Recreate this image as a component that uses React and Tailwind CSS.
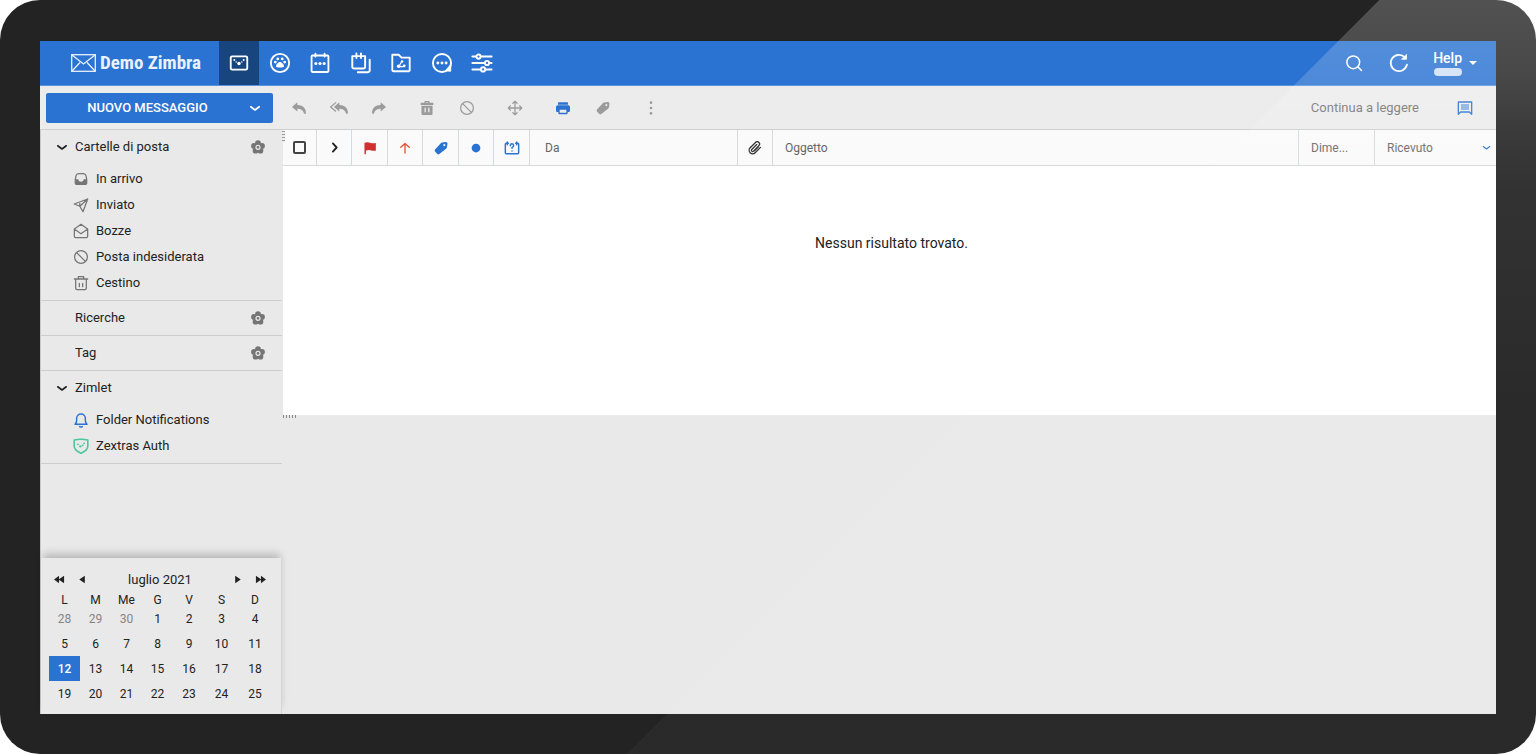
import clsx from 'clsx'

const Icon = ({ size = 16, children, className, solid = false, stroke = 2 }) => (
  <svg
    width={size}
    height={size}
    viewBox="0 0 24 24"
    className={clsx('shrink-0', className)}
    fill={solid ? 'currentColor' : 'none'}
    stroke={solid ? 'none' : 'currentColor'}
    strokeWidth={stroke}
    strokeLinecap="round"
    strokeLinejoin="round"
    aria-hidden="true"
  >
    {children}
  </svg>
)

const ChevronDown = ({ size = 12, className }) => (
  <Icon size={size} stroke={3.2} className={className}>
    <path d="M3.500 9.500 12 16l8.500-6.500" />
  </Icon>
)

const Flower = () => (
  <Icon size={16} solid className="text-[#757575]">
    <circle cx="12" cy="6" r="4.3" />
    <circle cx="18" cy="10.4" r="4.3" />
    <circle cx="15.7" cy="17.6" r="4.3" />
    <circle cx="8.3" cy="17.6" r="4.3" />
    <circle cx="6" cy="10.4" r="4.3" />
    <circle cx="12" cy="12.5" r="5" />
    <circle cx="12" cy="12.5" r="3" fill="none" stroke="#e9e9e9" strokeWidth="1.8" />
  </Icon>
)

const Forbidden = ({ size }) => (
  <Icon size={size} stroke={1.9}>
    <circle cx="12" cy="12" r="9.6" />
    <path d="M5.4 5.4l13.2 13.2" />
  </Icon>
)

const Tag = () => (
  <Icon size={16} solid>
    <path
      fillRule="evenodd"
      d="M13.5 3.8 19.5 3q2.3 0 2.2 2.3l-.7 5.7q-.2 1-1 1.700L9.500 21q-1.500 1.200-3 0L3 17.300q-1.200-1.500 0-3L11.700 4.800q.8-.8 1.800-1zM17 6a1.600 1.600 0 1 0 .01 0z"
    />
  </Icon>
)

const apps = [
  {
    name: 'Posta',
    icon: (
      <Icon size={22} stroke={2}>
        <rect x="3" y="4.800" width="18" height="14.500" rx="1.500" />
        <g fill="currentColor" stroke="none">
          <circle cx="6.900" cy="8.700" r="1.100" />
          <circle cx="8.900" cy="10.800" r="0.800" />
          <circle cx="12" cy="12.600" r="1.900" />
          <circle cx="15.100" cy="10.800" r="0.800" />
          <circle cx="17.100" cy="8.700" r="1.100" />
        </g>
      </Icon>
    ),
  },
  {
    name: 'Contatti',
    icon: (
      <Icon size={22} stroke={2}>
        <circle cx="12" cy="12" r="10" />
        <g fill="currentColor" stroke="none">
          <circle cx="6.900" cy="11" r="1.500" />
          <circle cx="9.600" cy="7.500" r="1.500" />
          <circle cx="14.400" cy="7.500" r="1.500" />
          <circle cx="17.100" cy="11" r="1.500" />
          <path d="M12 11c2.200 0 4.300 2.800 4.300 4.600 0 1.200-2.100 1.400-4.300 1.400s-4.300-.2-4.300-1.400c0-1.800 2.100-4.600 4.300-4.600z" />
        </g>
      </Icon>
    ),
  },
  {
    name: 'Agenda',
    icon: (
      <Icon size={22} stroke={2}>
        <rect x="2.800" y="3.800" width="18.400" height="18" rx="1" />
        <path d="M7 1.800V5M17 1.800V5" />
        <g fill="currentColor" stroke="none">
          <circle cx="7.500" cy="12.500" r="1.700" />
          <circle cx="12" cy="12.500" r="1.700" />
          <circle cx="16.500" cy="12.500" r="1.700" />
        </g>
      </Icon>
    ),
  },
  {
    name: 'Impegni',
    icon: (
      <Icon size={22} stroke={2.1}>
        <path d="M2.500 4.500h14v11.500q0 2-2 2h-10q-2 0-2-2zM7 1.500v5M12 1.500v5M21.500 8.500V20q0 2-2 2H8.500" />
      </Icon>
    ),
  },
  {
    name: 'Valigetta',
    icon: (
      <Icon size={22} stroke={2}>
        <path d="M2.500 3h7l3 3.200h9V20q0 1-1 1h-17q-1 0-1-1z" />
        <path d="M13 10l-3.500 6h5" strokeWidth="1.200" />
        <g fill="currentColor" stroke="none">
          <circle cx="13.200" cy="10.300" r="1.400" />
          <circle cx="9.500" cy="15.500" r="2" />
          <circle cx="15.500" cy="15" r="1.500" />
        </g>
      </Icon>
    ),
  },
  {
    name: 'Chat',
    icon: (
      <Icon size={22} stroke={2.1}>
        <circle cx="12" cy="12" r="9.900" />
        <path d="M21.500 14v7l-5.500-.5z" fill="currentColor" strokeWidth="1" />
        <g fill="currentColor" stroke="none">
          <circle cx="7.500" cy="12" r="1.600" />
          <circle cx="12" cy="12" r="1.600" />
          <circle cx="16.500" cy="12" r="1.600" />
        </g>
      </Icon>
    ),
  },
  {
    name: 'Preferenze',
    icon: (
      <Icon size={22} stroke={2.1}>
        <path d="M1.500 5h4M11 5h11.500M1.500 12h13M20.500 12h2M1.500 19h9M16 19h6.500" />
        <circle cx="8.200" cy="5" r="2.300" />
        <circle cx="17.500" cy="12" r="2.300" />
        <circle cx="13.200" cy="19" r="2.300" />
      </Icon>
    ),
  },
]

const replyPath = 'M9.500 3.500 1.500 10.500l8 6.800v-4c4.500 0 8 1.200 10.300 7.200h2.500C23 12.500 17.500 7.500 9.500 7.500z'

const actions = [
  [
    { name: 'Rispondi', icon: <Icon size={16} solid><path d={replyPath} /></Icon> },
    {
      name: 'Rispondi a tutti',
      icon: (
        <svg width="18" height="16" viewBox="0 0 27 24" fill="currentColor" aria-hidden="true">
          <path d={replyPath} transform="translate(4.500 0)" />
          <path d="M9 3.500l-8 7 8 6.800" fill="none" stroke="currentColor" strokeWidth="1.800" />
        </svg>
      ),
    },
    { name: 'Inoltra', icon: <Icon size={16} solid className="-scale-x-100"><path d={replyPath} /></Icon> },
  ],
  [
    {
      name: 'Elimina',
      icon: (
        <Icon size={16} solid>
          <path fillRule="evenodd" d="M8 4V3q0-1.500 1.500-1.500h5Q16 1.500 16 3v1h5.500v3.500h-19V4zM10 4h4v-.8h-4zM3.700 8.500h16.600v12q0 2-2 2H5.700q-2 0-2-2zM8.300 11.500v7h2v-7zM13.700 11.500v7h2v-7z" />
        </Icon>
      ),
    },
    { name: 'Segna come indesiderata', icon: <Forbidden size={16} /> },
  ],
  [
    {
      name: 'Sposta',
      icon: (
        <Icon size={16} stroke={1.9}>
          <path d="M12 2v20M2 12h20M8.800 5 12 2l3.200 3M8.800 19l3.200 3 3.200-3M5 8.800 2 12l3 3.200M19 8.800l3 3.200-3 3.200" />
        </Icon>
      ),
    },
  ],
  [
    {
      name: 'Stampa',
      color: 'text-[#2b73d2]',
      icon: (
        <Icon size={16} solid>
          <path fillRule="evenodd" d="M5.500 3.500h13q1 0 1 1V7h-15V4.500q0-1 1-1zM4 8h16q2.500 0 2.500 2.500V16q0 2-2 2h-1.500v2q0 1.500-1.500 1.500h-11Q5 21.500 5 20v-2H3.500q-2 0-2-2v-5.500Q1.500 8 4 8zM7 14.500v4.800h10v-4.800z" />
        </Icon>
      ),
    },
    { name: 'Tag', icon: <Tag /> },
  ],
  [
    {
      name: 'Altro',
      icon: (
        <Icon size={16} solid>
          <circle cx="12" cy="4" r="2" />
          <circle cx="12" cy="12" r="2" />
          <circle cx="12" cy="20" r="2" />
        </Icon>
      ),
    },
  ],
]

const folders = [
  {
    name: 'In arrivo',
    icon: (
      <Icon size={16} solid>
        <path fillRule="evenodd" d="M8.500 3h7q4 0 5 4l1 5.500v6q0 2.500-2.500 2.500H5q-2.500 0-2.500-2.500v-6l1-5.500q1-4 5-4zM8.500 4.800q-2.600 0-3.200 2.700L4.500 12.500H8q0 3.500 4 3.500t4-3.500h3.500l-.8-5q-.6-2.700-3.200-2.700z" />
      </Icon>
    ),
  },
  {
    name: 'Inviato',
    icon: (
      <Icon size={16} stroke={1.9}>
        <path d="M22 3 1.800 10.500l8.400 3.400L15 22zM10.200 13.900 22 3M10.200 13.900v-4" />
      </Icon>
    ),
  },
  {
    name: 'Bozze',
    icon: (
      <Icon size={16} stroke={1.9}>
        <path d="M2 9 12 2l10 7v11q0 2-2 2H4q-2 0-2-2zM2.500 9.500 12 16l9.500-6.500" />
      </Icon>
    ),
  },
  { name: 'Posta indesiderata', icon: <Forbidden size={16} /> },
  {
    name: 'Cestino',
    icon: (
      <Icon size={16} stroke={1.9}>
        <path d="M2 6h20M8 5.500V2.500h8v3M4 6v14q0 2 2 2h12q2 0 2-2V6M9.500 12.500v5M14.500 12.500v5" />
      </Icon>
    ),
  },
]

const zimlets = [
  {
    name: 'Folder Notifications',
    color: 'text-[#2b73d2]',
    icon: (
      <Icon size={16} stroke={2.2}>
        <path d="M3 18.500q2.500-2 2.500-6V9.500a6.500 6.500 0 0 1 13 0v3q0 4 2.500 6zM10 21.800q2 1.300 4 0" />
      </Icon>
    ),
  },
  {
    name: 'Zextras Auth',
    color: 'text-[#4cc79d]',
    icon: (
      <Icon size={16} stroke={2.4}>
        <path d="M1.800 3Q12 .8 22.200 3v9.500q0 6-10.200 10.500Q1.800 18.500 1.800 12.500z" />
        <g fill="currentColor" stroke="none">
          <circle cx="7.500" cy="9.500" r="1.400" />
          <circle cx="16.500" cy="8" r="1.400" />
          <circle cx="14.500" cy="11" r="1.400" />
          <circle cx="11" cy="12.500" r="1.800" />
        </g>
      </Icon>
    ),
  },
]

const weekdays = ['L', 'M', 'Me', 'G', 'V', 'S', 'D']
const weeks = [
  [28, 29, 30, 1, 2, 3, 4],
  [5, 6, 7, 8, 9, 10, 11],
  [12, 13, 14, 15, 16, 17, 18],
  [19, 20, 21, 22, 23, 24, 25],
]

const Header = () => (
  <header className="flex h-[45px] items-stretch bg-[#2b73d2] text-white border-b border-[#5b93dd]">
    <a href="#" className="flex w-[179px] items-center gap-1 pl-[31px] font-['Roboto_Condensed','Roboto',sans-serif] text-[19px] font-bold whitespace-nowrap text-[#e9f1fb]">
      <svg width="25" height="18" viewBox="0 0 25 18" fill="none" stroke="currentColor" strokeWidth="1.3" aria-hidden="true">
        <rect x="0.700" y="0.700" width="23.600" height="16.600" />
        <path d="M1 1l11.500 9L24 1M1 17l8-8.500M24 17l-8-8.500" />
      </svg>
      Demo Zimbra
    </a>
    <nav className="flex w-[283px] justify-between">
      {apps.map((app, idx) => (
        <button key={app.name} aria-label={app.name} className={clsx('flex w-10 items-center justify-center', idx === 0 && 'bg-[#19457f]')}>
          {app.icon}
        </button>
      ))}
    </nav>
    <div className="ml-auto flex items-center pr-[19px]">
      <button aria-label="Cerca" className="mr-[26px]">
        <Icon size={18} stroke={2}>
          <circle cx="11" cy="11" r="8.500" />
          <path d="M17.500 17.500 22 22" />
        </Icon>
      </button>
      <button aria-label="Aggiorna" className="mr-6">
        <Icon size={20} stroke={2.2}>
          <path d="M21.500 14A9.800 9.800 0 1 1 19 5.200" />
          <path d="M21 2v5.500h-5.500z" fill="currentColor" strokeWidth="1" />
        </Icon>
      </button>
      <button className="flex items-center gap-[7px]">
        <span className="flex flex-col items-center gap-[2px] text-[14px] leading-4 font-medium">
          Help
          <span className="h-[8px] w-7 rounded-full bg-[#d0e0f4]" />
        </span>
        <svg width="8" height="4" viewBox="0 0 8 4" fill="currentColor" aria-hidden="true">
          <path d="M0 0h8L4 4z" />
        </svg>
      </button>
    </div>
  </header>
)

const Toolbar = () => (
  <div className="flex h-11 items-center border-b border-[#cfcfcf] bg-[#ececec]">
    <div className="w-[243px] shrink-0 pl-[6px]">
      <div className="flex h-[30px] w-[227px] rounded-xs bg-[#2b73d2] text-white">
        <button className="flex-1 pl-3 text-[13px] font-medium">NUOVO MESSAGGIO</button>
        <button aria-label="Altre opzioni" className="flex w-9 items-center justify-center">
          <ChevronDown />
        </button>
      </div>
    </div>
    <div className="flex gap-4 text-[#9b9b9b]">
      {actions.map((group, idx) => (
        <div key={idx} className="flex gap-2">
          {group.map((action) => (
            <button key={action.name} aria-label={action.name} className={clsx('flex h-8 w-8 items-center justify-center', action.color)}>
              {action.icon}
            </button>
          ))}
        </div>
      ))}
    </div>
    <button className="ml-auto text-[13px] text-[#757575]">Continua a leggere</button>
    <button aria-label="Vista" className="mr-[23px] ml-[38px] text-[#2b73d2]">
      <Icon size={16} stroke={2}>
        <path d="M2 3h20v18.500L18.500 18H5.500L2 21.500z" />
        <path d="M6.500 7.500h11M6.500 10.500h11M6.500 13.500h11" strokeWidth="1.500" />
      </Icon>
    </button>
  </div>
)

const SectionTitle = ({ title, open, options }) => (
  <div className="flex h-[34px] items-center pr-4 pl-[15px]">
    <span className="flex w-[19px] shrink-0">{open && <ChevronDown />}</span>
    <h2 className="flex-1">{title}</h2>
    {options && (
      <button aria-label={`Opzioni ${title}`}>
        <Flower />
      </button>
    )}
  </div>
)

const ItemList = ({ items }) => (
  <ul className="pt-[2px] pb-1">
    {items.map((item) => (
      <li key={item.name}>
        <a href="#" className="flex h-[26px] items-center gap-[7px] pl-8">
          <span className={item.color || 'text-[#757575]'}>{item.icon}</span>
          {item.name}
        </a>
      </li>
    ))}
  </ul>
)

const Calendar = () => (
  <div className="mt-auto border-r border-[#d5d5d5] bg-[#e9e9e9] px-2 py-2 shadow-[0_-6px_8px_-2px_rgba(0,0,0,0.22)]">
    <div className="flex h-[27px] items-center pr-[7px] pl-[5px]">
      <button aria-label="Anno precedente" className="mr-3">
        <Icon size={11} solid><path d="M0 12l11-8v16zM10 12l12-8v16z" /></Icon>
      </button>
      <button aria-label="Mese precedente">
        <Icon size={11} solid><path d="M5 12l12-8v16z" /></Icon>
      </button>
      <span className="flex-1 text-center">luglio 2021</span>
      <button aria-label="Mese successivo" className="mr-3">
        <Icon size={11} solid><path d="M19 12 7 4v16z" /></Icon>
      </button>
      <button aria-label="Anno successivo">
        <Icon size={11} solid><path d="M24 12 13 4v16zM14 12 2 4v16z" /></Icon>
      </button>
    </div>
    <table className="w-[223px] table-fixed text-center text-[12px] leading-3">
      <colgroup>
        <col className="w-[31px]" />
        <col className="w-[31px]" />
        <col className="w-[31px]" />
        <col className="w-[31px]" />
        <col className="w-[32px]" />
        <col className="w-[33px]" />
        <col className="w-[34px]" />
      </colgroup>
      <thead>
        <tr>
          {weekdays.map((day) => (
            <th key={day} className="h-[13px] p-0 font-normal">{day}</th>
          ))}
        </tr>
      </thead>
      <tbody>
        {weeks.map((week, row) => (
          <tr key={row}>
            {week.map((day) => (
              <td
                key={day}
                className={clsx(
                  'h-[25px] p-0',
                  row === 0 && day > 20 && 'text-[#858585]',
                  day === 12 && 'bg-[#2b73d2] font-medium text-white'
                )}
              >
                {day}
              </td>
            ))}
          </tr>
        ))}
      </tbody>
    </table>
  </div>
)

const Sidebar = () => (
  <aside className="flex w-[242px] shrink-0 flex-col border-l border-[#c9c9c9] bg-[#e9e9e9] text-[13px] text-[#222]">
    {/* Folders */}
    <section className="border-b border-[#cdcdcd]">
      <SectionTitle title="Cartelle di posta" open options />
      <ItemList items={folders} />
    </section>
    <section className="border-b border-[#cdcdcd]">
      <SectionTitle title="Ricerche" options />
    </section>
    <section className="border-b border-[#cdcdcd]">
      <SectionTitle title="Tag" options />
    </section>
    {/* Zimlets */}
    <section className="border-b border-[#cdcdcd]">
      <SectionTitle title="Zimlet" open />
      <ItemList items={zimlets} />
    </section>
    <Calendar />
  </aside>
)

const Column = ({ className, label, children }) => (
  <th aria-label={label} className={clsx('h-9 border-r border-b border-r-[#d3dae2] border-b-[#d9d9d9] p-0 font-normal last:border-r-0', className)}>
    {children}
  </th>
)

const MessageList = () => (
  <div className="h-[285px] shrink-0 bg-white">
    <table className="w-full table-fixed border-separate border-spacing-0 text-left text-[12px] text-[#666]">
      <thead className="bg-[#fafafa]">
        <tr>
          <Column className="w-[34px]">
            <input type="checkbox" aria-label="Seleziona tutto" className="mx-auto block h-[13px] w-[13px] appearance-none rounded-xs border-2 border-[#444]" />
          </Column>
          <Column label="Espandi" className="w-[35px] text-[#222]">
            <Icon size={13} stroke={3.4} className="mx-auto"><path d="M9 4.500l7 7.500-7 7.500" /></Icon>
          </Column>
          <Column label="Contrassegno" className="w-[36px] text-[#d32f2f]">
            <Icon size={14} solid className="mx-auto"><path d="M2.500 3q5-1.500 9.500 0t10 .5V16.500q-5 1-9-.5T5 16.500v6H2.500z" /></Icon>
          </Column>
          <Column label="Priorità" className="w-[35px] text-[#e8502e]">
            <Icon size={12} stroke={2.6} className="mx-auto"><path d="M12 22V3M3.500 10.500 12 3l8.500 7.500" /></Icon>
          </Column>
          <Column label="Tag" className="w-[36px] text-[#2b73d2]">
            <span className="flex justify-center"><Tag /></span>
          </Column>
          <Column label="Stato" className="w-[35px] text-[#2b73d2]">
            <Icon size={10} solid className="mx-auto"><circle cx="12" cy="12" r="10.500" /></Icon>
          </Column>
          <Column label="Evento" className="w-[36px] text-[#2b73d2]">
            <Icon size={16} stroke={2.2} className="mx-auto">
              <path d="M6.500 5H3.500Q2 5 2 6.500V19q0 1.500 1.500 1.500h17q1.500 0 1.500-1.500V6.500Q22 5 20.500 5h-3M5 3v4M19 3v4M9.500 8.500Q9.500 5.500 12 5.500t2.500 2.700Q14.500 10 12 11.500v1M12 16.300v.1" />
            </Icon>
          </Column>
          <Column className="w-[208px] pl-[15px]">Da</Column>
          <Column label="Allegato" className="w-[35px] text-[#333]">
            <Icon size={14} stroke={2.2} className="mx-auto">
              <path d="M21.400 11 12.200 20.200a6 6 0 0 1-8.500-8.500l9.200-9.200a4 4 0 0 1 5.700 5.700l-9.200 9.200a2 2 0 0 1-2.900-2.900l8.500-8.400M17.500 10.500l-6.500 6.500" />
            </Icon>
          </Column>
          <Column className="pl-3">Oggetto</Column>
          <Column className="w-[76px] pl-3">Dime...</Column>
          <Column className="w-[121px] pl-3">
            <span className="flex items-center justify-between pr-[5px]">
              Ricevuto
              <ChevronDown size={9} className="text-[#2b73d2]" />
            </span>
          </Column>
        </tr>
      </thead>
      <tbody>
        <tr>
          <td colSpan={12} className="pt-[67px] pl-1 text-center text-[14px] leading-5 text-[#222]">
            Nessun risultato trovato.
          </td>
        </tr>
      </tbody>
    </table>
  </div>
)

export default function App() {
  return (
    <div className="relative flex min-h-screen overflow-hidden rounded-[40px] bg-[#232323] px-10 pt-[41px] pb-10 font-['Roboto',sans-serif] text-[#333]">
      <div className="flex min-w-0 flex-1 flex-col">
        <Header />
        <Toolbar />
        <div className="flex flex-1 bg-[#e9e9e9]">
          <Sidebar />
          <main className="relative flex min-w-0 flex-1 flex-col pl-px">
            <MessageList />
            {/* Pane resize grips */}
            <span className="absolute top-px left-0 h-3 w-[3px] bg-[repeating-linear-gradient(#999_0_1px,#eee_1px_3px)]" />
            <span className="h-[3px] w-[14px] bg-[repeating-linear-gradient(90deg,#888_0_1px,transparent_1px_3px)]" />
          </main>
        </div>
      </div>
      {/* Glass reflection */}
      <div className="pointer-events-none absolute inset-0 bg-[linear-gradient(rgba(255,255,255,0.21),rgba(255,255,255,0.17)_10%,rgba(255,255,255,0.11)_17%,rgba(255,255,255,0.07)_25%,rgba(255,255,255,0.03)_55%)] [clip-path:polygon(89.8%_0,100%_0,100%_100%,40.8%_100%)]" />
    </div>
  )
}
